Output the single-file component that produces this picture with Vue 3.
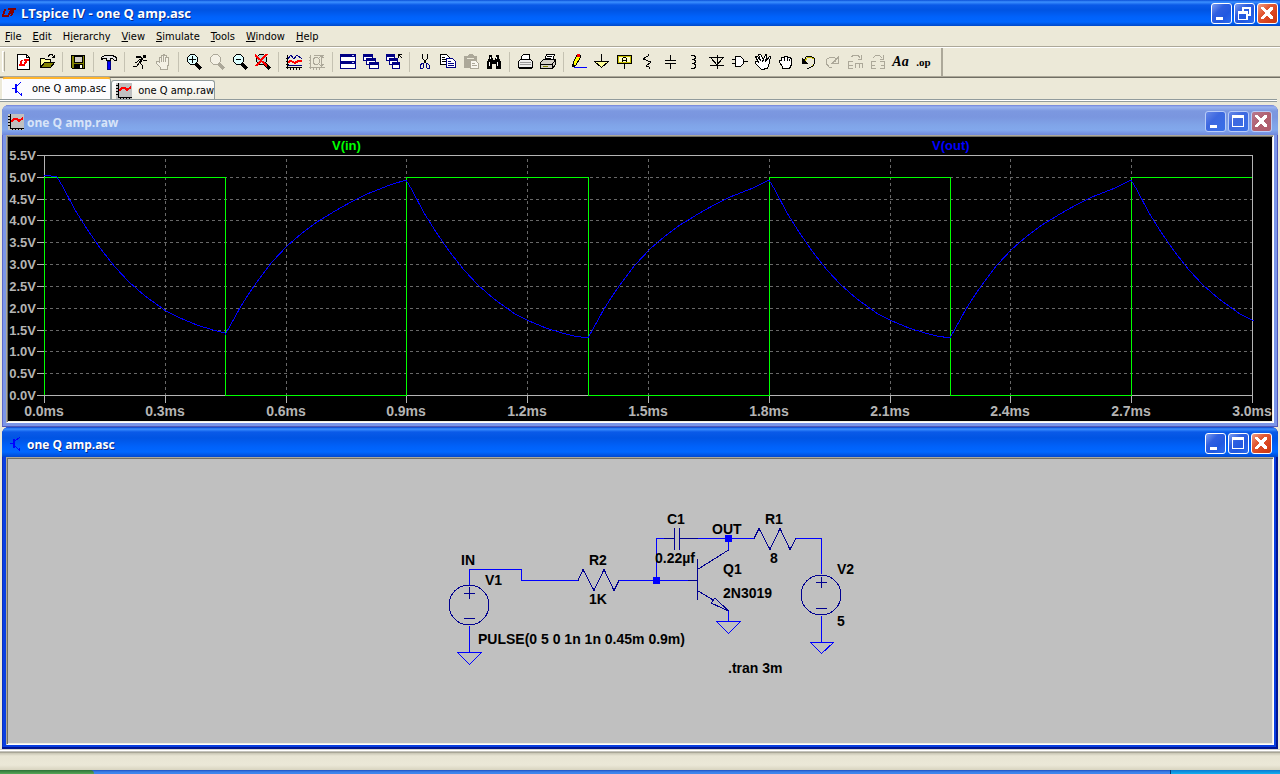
<script setup>
const menus = [
  ['', 'F', 'ile'], ['', 'E', 'dit'], ['H', 'i', 'erarchy'], ['', 'V', 'iew'],
  ['', 'S', 'imulate'], ['', 'T', 'ools'], ['', 'W', 'indow'], ['', 'H', 'elp'],
]

// Each icon layer: [path, fill, stroke, stroke width]
const K = '#000'
const G = '#aca899'
const N = '#000084'
const lens = (c, f) => [
  ['M4.5 .5h4l3 3v4l-3 3h-4l-3-3v-4z', f, c],
  ['M10 10l5 5', 'none', c, 3],
]
const hand = (c, f) => [
  ['M5.5 15.5v-2l-4-4v-2h2l1 1v-5h2v-2h2v-1h1v1h2v2h2v7l-1 2v3z', f, c],
  ['M6.5 3v5M8.5 2v6M10.500 3v5', 'none', c],
]
const groups = [
  [
    { n: 'New Schematic', p: [['M1.500 .500h9l3 3v12h-12z', '#fff', K], ['M10.500 .500v3h3', 'none', K], ['M6 6l-2 5h4l3-5M8 6h5', 'none', '#f00', 2]] },
    { n: 'Open', p: [['M1.5 13.500v-9h4l1 1h5v3', '#ff9', K], ['M1.500 13.500l4-5h10l-4 5z', '#848400', K], ['M9 2.500l2-2h2l2 3M15.500 .500v3h-3', 'none', K]] },
  ],
  [{ n: 'Save', p: [['M1.500 1.500h13v13h-12l-1-1z', '#848400', K], ['M4 2h8v6h-8z', '#d4d0c8', K], ['M4 10h9v5h-9z', K, 'none'], ['M10 11h2v3h-2z', '#fff', 'none']] }],
  [{ n: 'Control Panel', p: [['M.500 5.500v-2l3-2h8l4 2v3h-2l-2-2h-2v2h-4v-2h-3z', '#e6e6e6', K], ['M6.500 7.500h3v8h-3z', '#00f', N]] }],
  [
    { n: 'Run', p: [['M11 1h3v3h-3z', K, 'none'], ['M4 2.500h4l3 3M10.500 4l-3 5', 'none', K, 2], ['M8 5l-3 3h-2M11 6l2 1l2-1M8 9l2 2v4M7 9l-2 3h-4', 'none', K]] },
    { n: 'Halt', p: hand(G, '#f4f1e5') },
  ],
  [
    { n: 'Zoom in', p: [...lens(K, '#dff'), ['M6.500 2v7M3 5.500h7', 'none', K]] },
    { n: 'Pan', p: lens(G, '#f4f1e5') },
    { n: 'Zoom back', p: [...lens(K, '#dff'), ['M4 5.500h5', 'none', K]] },
    { n: 'Zoom full', p: [...lens(K, '#bdd'), ['M0 1l12 11M12 0l-11 12', 'none', '#f00', 2]] },
  ],
  [
    { n: 'Autorange', p: [['M1.500 1v14M0 13.500h16M4.500 14v2M7.500 14v2M10.500 14v2M13.500 14v2', 'none', K], ['M0 4h3v1H0zM0 7h3v1H0zM0 10h3v1H0z', K, 'none'], ['M2 5l3-4l3 4l3-4l5 4', 'none', N], ['M2 8l3-1l4 2l3-2h4', 'none', '#f00', 2], ['M2 11h4l2 1l2-1h6', 'none', N]] },
    { n: 'Plot settings', p: [['M1.500 1v14M0 13.500h16M0 3.500h2M0 6.500h2M0 9.500h2M4.500 14v2M7.500 14v2M10.500 14v2M5 1.500h10M12.500 2v11M10 4l2-2l3 2M10 10l2 2l3-2M5.500 3.500h3l2 2v3l-2 2h-3l-1-2v-3z', 'none', G]] },
  ],
  [
    { n: 'Tile', p: [['M.500 .500h15v7h-15zM.500 7.500h15v7h-15z', '#fff', N], ['M0 0h16v3H0zM0 7h16v3H0z', N, 'none'], ['M12 1.500h2M12 8.500h2', 'none', '#ccf']] },
    { n: 'Cascade', p: [['M.500 .500h9v6h-9z', '#fff', N], ['M0 0h10v3H0z', N, 'none'], ['M3.500 4.500h9v6h-9z', '#fff', N], ['M3 4h10v3H3z', N, 'none'], ['M6.500 8.500h9v6h-9z', '#fff', N], ['M6 8h10v3H6z', N, 'none']] },
    { n: 'Close all', p: [['M.500 .500h8v6h-8z', '#fff', N], ['M0 0h9v3H0z', N, 'none'], ['M3.500 4.500h8v6h-8z', '#fff', N], ['M3 4h9v3H3z', N, 'none'], ['M6.500 8.500h7v6h-7z', '#fff', N], ['M6 8h8v3H6z', N, 'none'], ['M12.500 4v-3.500h3M12 0l4 4', 'none', K]] },
  ],
  [
    { n: 'Cut', p: [['M5.500 0v4l4 6M10.500 0v4l-4 6', 'none', K], ['M4.500 9.500h2v4l-1 1h-2v-3zM9.500 9.500h1l2 2v3h-2l-1-1z', 'none', N, 1]] },
    { n: 'Copy', p: [['M.500 .500h6l3 3v7h-9z', '#fff', K], ['M2 3.500h3M2 5.500h5M2 7.500h5', 'none', K], ['M6.500 4.500h6l3 3v6h-9z', '#fff', N], ['M8 7.500h3M8 9.500h6M8 11.500h6', 'none', N]] },
    { n: 'Paste', p: [['M1 2h3l2-2h3l2 2h3v12H1z', G, 'none'], ['M4 4h7', 'none', '#ece9d8'], ['M7.500 6.500h5l3 3v5h-8z', '#f8f6ee', G], ['M9 9.500h3M9 11.500h5', 'none', G]] },
    { n: 'Find', p: [['M3 1h3v3h1v2h2v-2h1v-3h3v3l2 4v7h-5v-5h-4v5H1v-7l2-4z', K, 'none'], ['M4.500 3v2M10.500 3v2M3.500 8v4M11.500 8v4', 'none', '#fff']] },
  ],
  [
    { n: 'Print preview', p: [['M4.500 6.500v-4l2-2h6v6', '#fff', K], ['M1.500 7.500l2-2h10l2 2v6h-14z', '#eee', K], ['M3 8.500h11M3 10.500h11', 'none', '#999'], ['M2 14.500h13', 'none', K]] },
    { n: 'Print', p: [['M4.500 6.500l2-6h8l-2 6', '#fff', K], ['M7 2.500h5M6 4.500h5', 'none', K], ['M.500 8.500l3-3h12v5l-3 4h-12z', '#d4d0c8', K], ['M1 10.500h11l3-4M12.500 11v3', 'none', K], ['M3 12.500h5', 'none', '#848400', 1]] },
  ],
  [
    { n: 'Wire', p: [['M2 9l4-8h3v3l-4 7l-3 2z', '#ff0', K], ['M6 0h3v3h-3z', '#f00', 'none'], ['M1 10h2v3H1z', K, 'none'], ['M3 13.500h13', 'none', '#00f']] },
    { n: 'Ground', p: [['M7.500 0v8', 'none', K, 1], ['M.500 7.500h14l-7 6z', '#ff9', K]] },
    { n: 'Label net', p: [['M.500 1.500h14v8h-14z', '#ffc', K], ['M1.500 2.500h12v6h-12z', 'none', '#c8c000'], ['M7.500 10v5', 'none', K], ['M5.500 8v-4M9.500 8v-4M6 3.500h3M5 6.500h5', 'none', K]] },
    { n: 'Resistor', p: [['M8 0v2l-5 3l8 3l-5 4l3 1v2', 'none', K]] },
    { n: 'Capacitor', p: [['M7.500 1v5M2 6.500h11M2 9.500h11M7.500 10v5', 'none', K]] },
    { n: 'Inductor', p: [['M5 1.500h3l1 1v2l-1 1h-2h2l1 1v2l-1 1h-2h2l1 1v3l-1 1h-3', 'none', K]] },
    { n: 'Diode', p: [['M8 1v14M0 3.500h15M2 4l6 7l6-7M1 11.500h14', 'none', K]] },
    { n: 'Component', p: [['M3.500 2.500h5l3 3v4l-3 3h-5z', '#fff', K], ['M0 5.500h3M0 9.500h3M12 7.500h4', 'none', K]] },
    { n: 'Move', p: [['M6.500 15.500l-6-6v-2h2l1 1l-3-6h2l3 4l-2-6h2l3 5l2-5h1v6l3-4h1l-1 6l-2 6z', '#fff', K], ['M9 5l-2 3M11 5l-1 3', 'none', K]] },
    { n: 'Drag', p: [['M4.500 14.500v-2l-3-4v-2h2v-3h3v-1h3v1h3v1h1v6l-2 4z', '#fff', K], ['M6.500 4v3M9.500 4v3M11.500 5v2', 'none', K]] },
    { n: 'Undo', p: [['M4 7l2-3l4-1l3 2v5l-3 3', 'none', '#c8c000', 1], ['M3 7l2-4l4-1l4 2l1 4l-2 4l-4 2h-2', 'none', K], ['M1 3v7h6z', K, 'none']] },
    { n: 'Redo', p: [['M12 8l-1-4l-4-1l-4 2l-1 4l3 4h3M14.500 3v6h-6z', 'none', G]] },
    { n: 'Rotate', p: [['M4 3l3-2h4l2 3M14.500 1v4h-4M1 7v8M2 7.500h4M2 11h4M2 14.500h4M8 9.500h8M8.500 10v4M12 10v4M15.500 10v4', 'none', G, 1]] },
    { n: 'Mirror', p: [['M3 4l3-3h3l3 3M13.500 1v4h-4M1 7v8M2 7.500h4M2 11h3M2 14.500h4M14.500 7v8M10 7.500h4M11 11h4M10 14.500h4', 'none', G, 1]] },
    { n: 'Text', t: 'Aa', c: 'glyph-text' },
    { n: 'SPICE Directive', t: '.op', c: 'glyph-op' },
  ],
]

// Waveform plot geometry
const xs = Array.from({ length: 11 }, (_, i) => Math.round(44 + i * 120.8))
const ys = Array.from({ length: 12 }, (_, i) => Math.round(155 + (i * 240) / 11))
const xTicks = xs.map((x, i) => ({ x, label: (i * 0.3).toFixed(1) + 'ms' }))
const yTicks = ys.map((y, i) => ({ y, label: (5.5 - i * 0.5).toFixed(1) + 'V' }))
const vin = 'M44.5 395V177.500H225.500V395.500H406.500V177.500H588.500V395.500H769.500V177.500H950.500V395.500H1131.500V177.500H1252'
const fall = [[6, 10], [18, 33], [30, 52], [43, 71], [58, 90], [72, 105], [88, 119], [109, 134], [123, 141], [140, 148], [156, 153], [168, 156]]
const rise = [[5, -9], [16, -29], [25, -43], [34, -56], [47, -73], [62, -89], [76, -101], [92, -113], [110, -124], [126, -133], [142, -141], [165, -150]]
const run = (x, y, pts) => [[x, y], ...pts.map(([a, b]) => [x + a, y + b])]
const vout = [
  [44, 175], ...run(57, 177, fall), [225, 335],
  ...run(225, 335, rise), ...run(406, 180, fall),
  ...run(588, 338, rise), ...run(769, 180, fall),
  ...run(950, 338, rise), ...run(1131, 180, fall.slice(0, 9)),
].map((p) => p.join(',')).join(' ')

const labels = [
  [461, 565, 'IN'], [485, 585, 'V1'], [589, 565, 'R2'], [589, 604, '1K'],
  [478, 644, 'PULSE(0 5 0 1n 1n 0.45m 0.9m)'], [667, 524, 'C1'], [655, 563, '0.22µf'],
  [712, 534, 'OUT'], [765, 524, 'R1'], [770, 563, '8'], [723, 574, 'Q1'],
  [723, 598, '2N3019'], [837, 574, 'V2'], [837, 626, '5'], [728, 673, '.tran 3m'],
]
const windows = [
  { title: 'one Q amp.raw', kind: 'plot' },
  { title: 'one Q amp.asc', kind: 'schematic' },
]
const controls = [
  { n: 'Minimize', p: 'M5 14h7v3H5z' },
  { n: 'Maximize', p: 'M4 4h12v12H4zM5 7v8h10V7z' },
  { n: 'Close', p: 'M5 4h2l3 4l3-4h3v2l-4 4l4 4v2h-3l-3-4l-3 4H4v-2l4-4l-4-4V4z' },
]
const restore = 'M8 4h9v9h-3v4H4V8h4zM10 6v2h4v3h1V6zM5 11v5h7v-5z'
</script>

<template>
  <div class="app">
    <header class="titlebar">
      <svg class="logo" width="16" height="16" viewBox="0 0 16 16" aria-hidden="true">
        <path d="M4 4L2 11h5l4-7M7 4h8M13 4l-3 7" fill="none" stroke="#840000" stroke-width="2" />
      </svg>
      <h1>LTspice IV - one Q amp.asc</h1>
      <div class="controls">
        <button v-for="(c, i) in controls" :key="c.n" :class="{ close: i === 2 }" :aria-label="c.n">
          <svg width="19" height="19" viewBox="1 1 19 19"><path :d="i === 1 ? restore : c.p" fill="#fff" fill-rule="evenodd" /></svg>
        </button>
      </div>
    </header>

    <nav class="menubar">
      <button v-for="m in menus" :key="m.join('')">{{ m[0] }}<u>{{ m[1] }}</u>{{ m[2] }}</button>
    </nav>

    <div class="toolbar">
      <span class="grip"></span>
      <div v-for="(g, gi) in groups" :key="gi" class="group">
        <button v-for="b in g" :key="b.n" :aria-label="b.n">
          <span v-if="b.t" :class="b.c">{{ b.t }}</span>
          <svg v-else width="16" height="16" viewBox="0 0 16 16">
            <path v-for="(l, i) in b.p" :key="i" :d="l[0]" :fill="l[1]" :stroke="l[2]" :stroke-width="l[3] || 1" />
          </svg>
        </button>
      </div>
    </div>

    <div class="tabs">
      <button v-for="(t, i) in ['one Q amp.asc', 'one Q amp.raw']" :key="t" class="tab" :class="{ active: i === 0 }">
        <svg v-if="i === 0" width="16" height="16" viewBox="0 0 16 16" aria-hidden="true">
          <path d="M0 7.500h4M9 1L4.500 5.500M4.500 10l5 4" fill="none" stroke="#00f" />
          <path d="M3 3h2v9H3zM7 14l3-3v4z" fill="#00f" />
        </svg>
        <svg v-else width="16" height="16" viewBox="0 0 16 16" aria-hidden="true">
          <path d="M0 0h16v16H0z" fill="#c0c0c0" />
          <path d="M2 0v14h14M0 2.500h2M0 5.500h2M0 8.500h2M0 11.500h2M4.500 14v2M7.500 14v2M10.500 14v2M13.500 14v2" fill="none" stroke="#000" />
          <path d="M3 8l3-3h3l2 2l4-3" fill="none" stroke="#f00" stroke-width="2" />
        </svg>
        <span>{{ t }}</span>
      </button>
    </div>

    <main class="workspace">
      <section v-for="w in windows" :key="w.kind" class="window" :class="w.kind">
        <header>
          <svg v-if="w.kind === 'schematic'" width="16" height="16" viewBox="0 0 16 16" aria-hidden="true">
            <path d="M2 7.500h4M12 1L6.500 5.500M6.500 10l5 4" fill="none" stroke="#00f" />
            <path d="M5 3h2v9H5zM9 14l3-3v4z" fill="#00f" />
          </svg>
          <svg v-else width="16" height="16" viewBox="0 0 16 16" aria-hidden="true">
            <path d="M0 0h16v16H0z" fill="#c0c0c0" />
            <path d="M2 0v14h14M0 2.500h2M0 5.500h2M0 8.500h2M0 11.500h2M4.500 14v2M7.500 14v2M10.500 14v2M13.500 14v2" fill="none" stroke="#000" />
            <path d="M3 8l3-3h3l2 2l4-3" fill="none" stroke="#f00" stroke-width="2" />
          </svg>
          <h2>{{ w.title }}</h2>
          <div class="controls">
            <button v-for="(c, i) in controls" :key="c.n" :class="{ close: i === 2 }" :aria-label="c.n">
              <svg width="19" height="19" viewBox="1 1 19 19"><path :d="c.p" fill="#fff" fill-rule="evenodd" /></svg>
            </button>
          </div>
        </header>

        <div class="content">
          <svg v-if="w.kind === 'plot'" class="canvas" viewBox="8 137 1264 284">
            <g class="grid">
              <path v-for="x in xs.slice(1, 10)" :key="x" :d="`M${x + 0.5} 159V395`" />
              <path v-for="y in ys.slice(1, 11)" :key="y" :d="`M44 ${y + 0.5}H1252`" />
            </g>
            <g class="frame">
              <rect x="44.5" y="155.5" width="1208" height="240" />
              <path v-for="t in yTicks" :key="t.label" :d="`M37 ${t.y + 0.5}h7`" />
              <path v-for="t in xTicks" :key="t.label" :d="`M${t.x + 0.5} 396v7`" />
            </g>
            <path class="vin" :d="vin" />
            <polyline class="vout" :points="vout" />
            <text v-for="t in yTicks" :key="t.label" class="ylabel" x="36" :y="t.y + 5">{{ t.label }}</text>
            <text v-for="t in xTicks" :key="t.label" class="xlabel" :x="t.x" y="416">{{ t.label }}</text>
            <text class="vin-name" x="332" y="150">V(in)</text>
            <text class="vout-name" x="932" y="150">V(out)</text>
          </svg>

          <svg v-else class="canvas" viewBox="8 459 1264 284">
            <g class="wire">
              <path d="M469.500 585V569.500H521.500V580.500H578M619 580.500H697M656.500 580V538.500H674M680 538.500H754M728.500 538V550M796 538.500H821.500V574M469.500 626V652M821.500 616V642M728.500 611V621" />
              <path d="M457.500 652.500h24l-12 12zM716.500 621.500h24l-12 12zM810.500 642.500h23l-12 11z" />
            </g>
            <path d="M653 577h7v7h-7zM725 535h7v7h-7z" fill="#00f" />
            <g class="part">
              <circle cx="469" cy="605" r="20" />
              <circle cx="821" cy="595" r="20" />
              <path d="M469.500 587v12M464 593.500h11M464 618.500h11M821.500 577v11M816 582.500h11M816 608.500h11" />
              <path d="M578 580.500l5-11l11 21l10-21l10 21l5-10" />
              <path d="M754 538.500l5-10l11 21l10-21l10 21l6-11" />
              <path d="M674.500 528v22M679.500 528v22M664 538.500h10M680 538.500h18" />
              <path d="M697.500 559v41M688 580.500h9M697.500 569.500L728.500 550M697.500 590.500L714 600.500M715 598L711 603L728.500 611z" />
            </g>
            <text v-for="l in labels" :key="l[2]" class="part-label" :x="l[0]" :y="l[1]">{{ l[2] }}</text>
          </svg>
        </div>
      </section>
    </main>

    <footer class="statusbar"></footer>
    <div class="taskbar"><span class="start"></span><span class="tray"></span></div>
  </div>
</template>

<style>
body {
  background: #ece9d8;
}
</style>

<style scoped>
.app {
  display: flex;
  flex-direction: column;
  min-height: 100vh;
  box-sizing: border-box;
  background: #ece9d8;
  color: #000;
  font: 11px/14px "DejaVu Sans Condensed", "DejaVu Sans", sans-serif;
  overflow: hidden;
}
svg {
  display: block;
  flex: none;
  shape-rendering: crispEdges;
}
button {
  margin: 0;
  padding: 0;
  border: 0;
  background: none;
  color: inherit;
  font: inherit;
}
h1,
h2 {
  flex: 1;
  margin: 0;
  color: #fff;
  font: bold 12px/18px "Open Sans", sans-serif;
  text-shadow: 1px 1px #0a2a88;
}
h1 {
  font-size: 13px;
}
.titlebar {
  display: flex;
  align-items: center;
  gap: 4px;
  height: 26px;
  padding: 0 2px 0 1px;
  box-sizing: border-box;
  background: linear-gradient(#0a4fd8 0, #3c90ff 2px, #0a5ae8 5px, #0054e3 10px, #0062fb 17px, #0066ff 22px, #0048c8 26px);
}
.controls {
  display: flex;
  gap: 2px;
}
.controls button {
  width: 21px;
  height: 21px;
  box-sizing: border-box;
  border: 1px solid #fff;
  border-radius: 3px;
  overflow: hidden;
  background: linear-gradient(135deg, #7d9df0, #2f5fe0 35%, #2158e0 65%, #2b6cf0);
}
.controls .close {
  background: linear-gradient(135deg, #f0a088, #e25a35 35%, #d8421c 70%, #c83810);
}
.menubar {
  display: flex;
  align-items: center;
  gap: 11px;
  height: 22px;
  padding: 0 5px;
  box-sizing: border-box;
  border-bottom: 1px solid #fff;
  box-shadow: inset 0 -1px #aca899;
}
.toolbar {
  display: flex;
  align-items: center;
  height: 30px;
  box-sizing: border-box;
  padding: 0 0 2px 2px;
  border-bottom: 1px solid #716f64;
  box-shadow: inset 0 -1px #aca899;
}
.grip {
  width: 3px;
  height: 21px;
  margin-right: 7px;
  box-sizing: border-box;
  border: 1px solid #fff;
  border-right-color: #aca899;
}
.group {
  display: flex;
  align-items: center;
}
.group::after {
  content: "";
  width: 1px;
  height: 20px;
  margin: 0 3px 0 4px;
  background: #c5c2b2;
}
.group:last-child::after {
  width: 2px;
  height: 28px;
  margin: 0 0 0 6px;
  background: #aca899;
}
.group button {
  display: flex;
  align-items: center;
  justify-content: center;
  width: 23px;
  height: 22px;
}
.glyph-text {
  font: italic bold 14px/16px "Liberation Serif", serif;
}
.glyph-op {
  font: bold 11px/16px "Liberation Serif", serif;
}
.tabs {
  display: flex;
  align-items: flex-end;
  height: 24px;
  margin-right: 3px;
  padding: 0 0 3px 2px;
  box-sizing: border-box;
  background: linear-gradient(#919b9c, #919b9c) 0 21px / 100% 1px no-repeat, linear-gradient(#fff, #fff) 0 22px / 100% 1px no-repeat, linear-gradient(#919b9c, #919b9c) 0 23px / 100% 1px no-repeat;
}
.tab {
  display: flex;
  align-items: center;
  gap: 6px;
  height: 19px;
  padding: 2px 0 0 4px;
  border: 1px solid #919b9c;
  border-bottom: 0;
  border-radius: 3px 3px 0 0;
  box-sizing: border-box;
  background: linear-gradient(#fff, #f0eee4);
}
.tab.active {
  gap: 4px;
  height: 22px;
  padding: 0 4px 0 9px;
  border-top: 2px solid #ffb52e;
  border-left-color: #fff;
  background: #fcfcfe;
}
.workspace {
  margin: 3px 2px 0;
}
.window {
  border-radius: 7px 7px 0 0;
  padding: 0 4px 4px;
  background: #0a3fe0;
  box-shadow: inset -2px -2px #001590, inset 1px 0 #0a30c0;
}
.window.plot {
  background: #7b96e8;
  box-shadow: inset -1px -1px #5058b8, inset 1px 0 #5c68c8;
}
.window > header {
  display: flex;
  align-items: center;
  gap: 3px;
  height: 30px;
  margin: 0 -4px;
  padding: 3px 6px 0;
  box-sizing: border-box;
  border-radius: 7px 7px 0 0;
  background: linear-gradient(#0a40c8 0, #3c90ff 2px, #0a5ae8 5px, #0054e3 11px, #0062fb 20px, #0068ff 25px, #0048d0 30px);
}
.window h2 {
  padding-top: 2px;
}
.window.plot > header {
  background: linear-gradient(#6f80d8 0, #9ab4f0 2px, #7c98e0 6px, #7a96df 12px, #80a4e8 20px, #82a8ec 25px, #7088dc 30px);
}
.window.plot h2 {
  color: #d8e4f8;
  text-shadow: none;
}
.window.plot .controls button {
  border-color: #b8ccf8;
  background: linear-gradient(135deg, #6688e8, #3d68e0 40%, #3870e8);
}
.window.plot .controls .close {
  background: linear-gradient(135deg, #b87890, #b06070 50%, #b05c6c);
}
.content {
  border: 1px solid;
  border-color: #aca899 #fff #fff #aca899;
  box-shadow: inset 1px 1px #716f64, inset -1px -1px #f1efe2;
  padding: 1px;
}
.canvas {
  width: 100%;
  height: auto;
}
.plot .canvas {
  background: #000;
}
.schematic .canvas {
  background: #c0c0c0;
}
.canvas text {
  font-family: "Liberation Sans", Arial, sans-serif;
  font-weight: bold;
  font-size: 13px;
  fill: #b4b4b4;
}
.grid path {
  stroke: #686868;
  stroke-dasharray: 3 3;
}
.frame {
  fill: none;
  stroke: #b4b4b4;
}
.vin {
  fill: none;
  stroke: #0f0;
}
.vout {
  fill: none;
  stroke: #00f;
}
.canvas .ylabel {
  text-anchor: end;
}
.canvas .xlabel {
  font-size: 14px;
  text-anchor: middle;
}
.canvas .vin-name {
  fill: #0f0;
}
.canvas .vout-name {
  fill: #00f;
}
.wire {
  fill: none;
  stroke: #00f;
}
.part {
  fill: none;
  stroke: #000090;
}
.canvas .part-label {
  font-size: 14px;
  fill: #000;
}
.statusbar {
  flex: 1;
  min-height: 21px;
  box-sizing: border-box;
  background: linear-gradient(#aca899 0, #fff 1px, #fff 2px, #888678 3px, #c8c5b4 4px, #e8e5d4 7px, #ebe8d7 16px, #d8d4c0 21px);
}
.taskbar {
  display: flex;
  justify-content: space-between;
  height: 4px;
  background: linear-gradient(#1f50c0, #3c80e8 2px, #3f88f0);
}
.start {
  width: 94px;
  border-radius: 0 4px 0 0;
  background: linear-gradient(#2c7038, #58a858);
}
.tray {
  width: 110px;
  border-left: 1px solid #083878;
  box-sizing: border-box;
  background: linear-gradient(#0c78d0, #12b0f0);
}
</style>
